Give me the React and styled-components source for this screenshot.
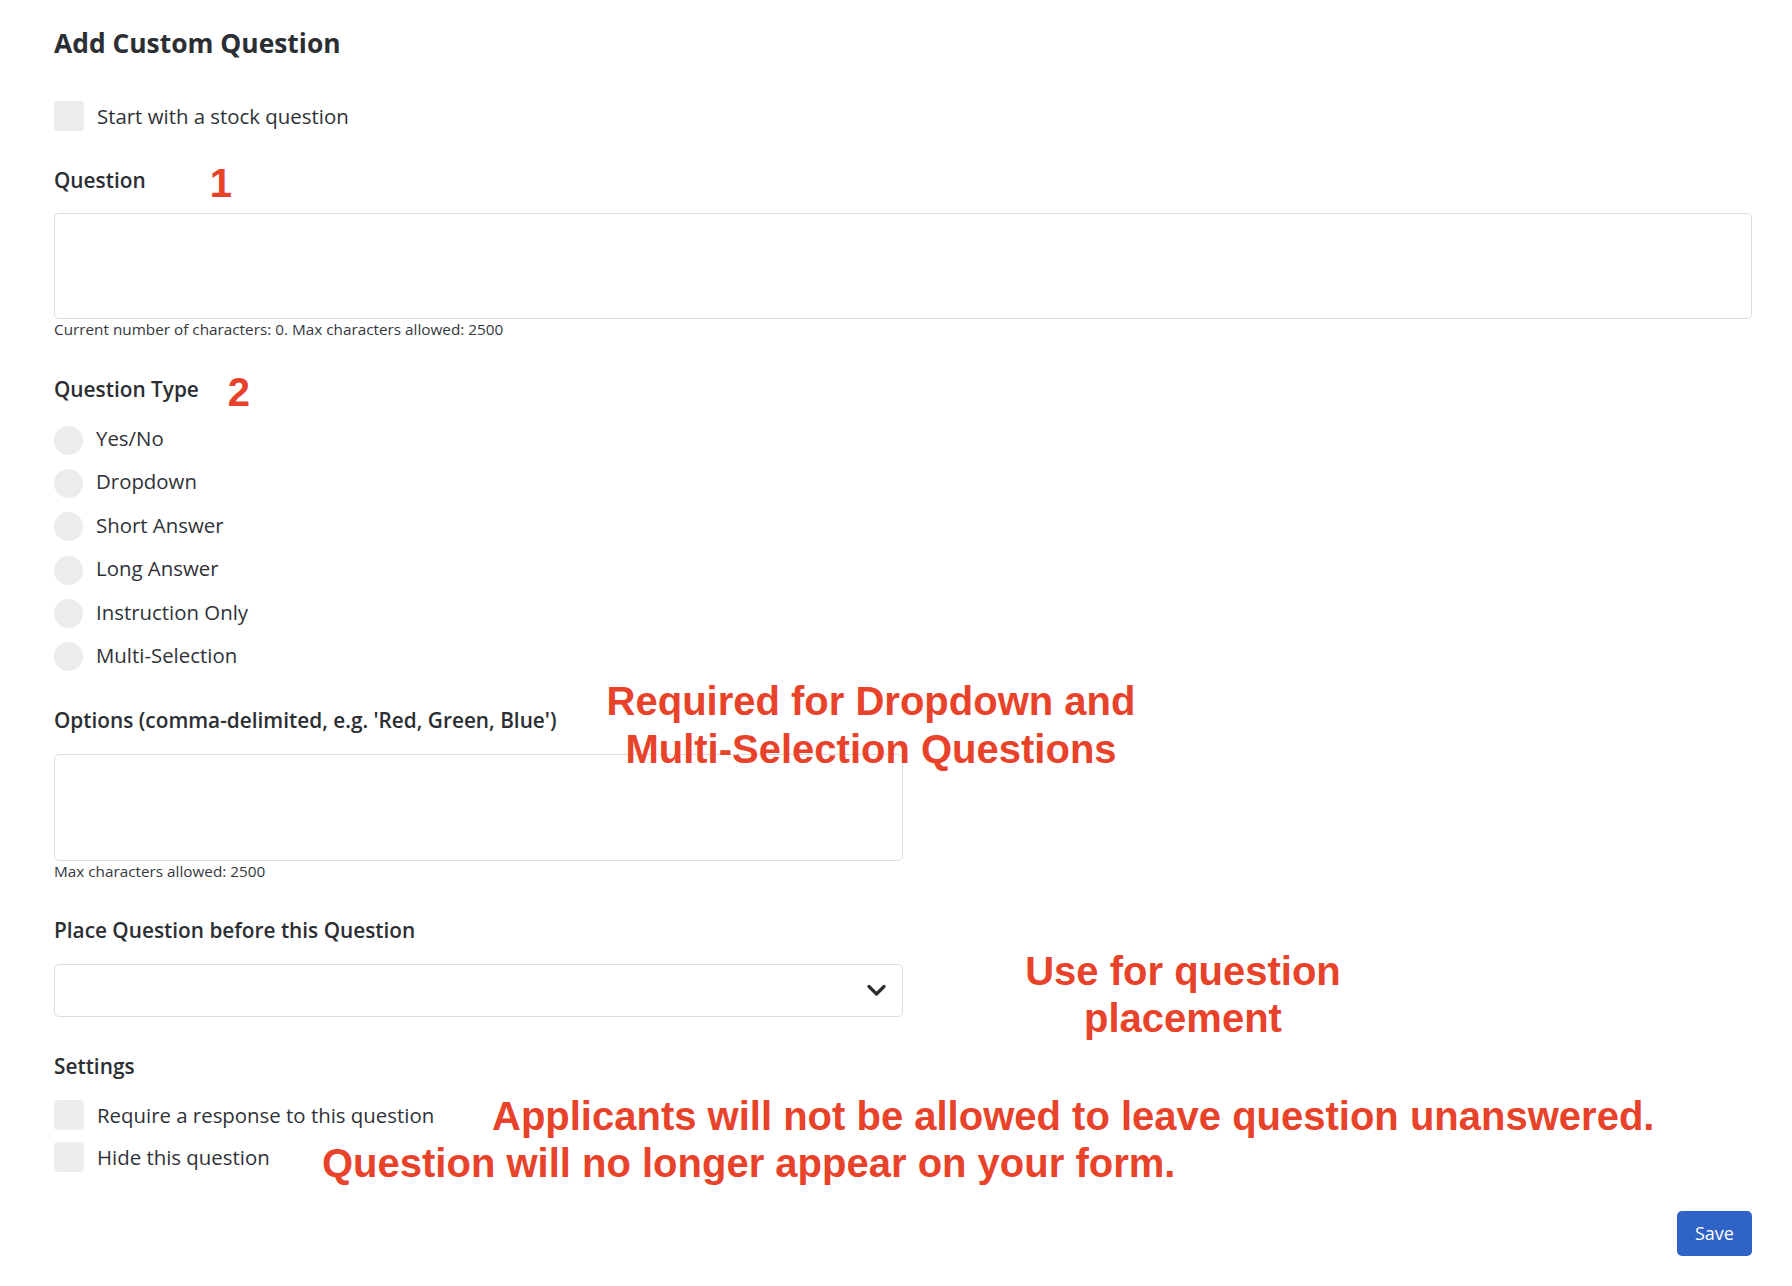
import React from 'react';
import styled, { createGlobalStyle } from 'styled-components';

const GlobalStyle = createGlobalStyle`
  html, body {
    margin: 0;
    padding: 0;
    background: #ffffff;
  }
  body {
    font-family: "Open Sans", "Liberation Sans", sans-serif;
    color: #2b2e33;
  }
`;

const Page = styled.div`
  position: relative;
  padding: 25px 40px 30px 54px;
  display: flex;
  flex-direction: column;
`;

const Title = styled.h1`
  margin: 0;
  font-size: 26.4px;
  line-height: 36px;
  font-weight: 700;
  color: #2b2e33;
`;

const CheckRow = styled.label`
  display: flex;
  align-items: center;
  gap: 13px;
  height: 30px;
  margin-top: ${(p) => p.$mt || 0}px;
`;

const Box = styled.span`
  width: 30px;
  height: 30px;
  border-radius: 4px;
  background: #ececee;
  flex-shrink: 0;
`;

const Radio = styled.span`
  width: 29px;
  height: 29px;
  border-radius: 50%;
  background: #ececee;
  flex-shrink: 0;
`;

const OptionText = styled.span`
  font-size: 20.4px;
  line-height: 30px;
  color: #2f3237;
  position: relative;
  top: ${(p) => p.$nudge || 0}px;
`;

const Section = styled.section`
  position: relative;
  margin-top: ${(p) => p.$mt}px;
  display: flex;
  flex-direction: column;
`;

const LabelRow = styled.div`
  display: flex;
  align-items: flex-start;
  height: 30px;
`;

const Label = styled.div`
  font-size: 20.8px;
  line-height: 30px;
  font-weight: 600;
  color: #2b2e33;
`;

const StepNumber = styled.span`
  font-family: "Liberation Sans", Arial, sans-serif;
  font-weight: 700;
  font-size: 40px;
  line-height: 30px;
  color: #e8432a;
  margin-top: 3px;
  margin-left: ${(p) => p.$ml}px;
`;

const TextArea = styled.textarea`
  display: block;
  box-sizing: border-box;
  width: ${(p) => (p.$width ? `${p.$width}px` : '100%')};
  height: ${(p) => p.$height}px;
  margin-top: ${(p) => p.$mt || 18}px;
  border: 1px solid #dcdcdc;
  border-radius: 5px;
  background: #fff;
  resize: none;
  outline: none;
  font-family: inherit;
`;

const Helper = styled.div`
  margin-top: 1px;
  font-size: 15.3px;
  line-height: 18px;
  color: #34373c;
`;

const RadioList = styled.div`
  margin-top: 21px;
  display: flex;
  flex-direction: column;
  gap: 13.4px;
`;

const RadioRow = styled.label`
  display: flex;
  align-items: center;
  gap: 13px;
  height: 30px;
`;

const Select = styled.div`
  box-sizing: border-box;
  width: 849px;
  height: 53px;
  margin-top: 19px;
  border: 1px solid #dcdcdc;
  border-radius: 5px;
  display: flex;
  align-items: center;
  justify-content: flex-end;
  padding-right: 16px;
`;

const Note = styled.div`
  position: absolute;
  top: ${(p) => p.$top}px;
  left: ${(p) => p.$left}px;
  width: ${(p) => (p.$width ? `${p.$width}px` : 'auto')};
  text-align: ${(p) => (p.$center ? 'center' : 'left')};
  white-space: ${(p) => (p.$center ? 'normal' : 'nowrap')};
  font-family: "Liberation Sans", Arial, sans-serif;
  font-weight: 700;
  font-size: 40px;
  line-height: ${(p) => p.$lh || 48}px;
  color: #e8432a;
  pointer-events: none;
`;

const Footer = styled.div`
  display: flex;
  justify-content: flex-end;
  margin-top: 39px;
`;

const SaveButton = styled.button`
  width: 75px;
  height: 45px;
  border: none;
  border-radius: 5px;
  background: #3063c6;
  color: #fff;
  font-family: "Open Sans", sans-serif;
  font-size: 18px;
  cursor: pointer;
`;

const Chevron = () => (
  <svg width="19" height="13" viewBox="0 0 19 13" fill="none">
    <path d="M2 2.5 L9.5 10 L17 2.5" stroke="#2b2e33" strokeWidth="3.2" strokeLinecap="round" strokeLinejoin="round" />
  </svg>
);

const types = ['Yes/No', 'Dropdown', 'Short Answer', 'Long Answer', 'Instruction Only', 'Multi-Selection'];

export default function App() {
  return (
    <Page>
      <GlobalStyle />
      <Title>Add Custom Question</Title>

      <CheckRow $mt={40}>
        <Box />
        <OptionText>Start with a stock question</OptionText>
      </CheckRow>

      <Section $mt={34}>
        <LabelRow>
          <Label>Question</Label>
          <StepNumber $ml={64}>1</StepNumber>
        </LabelRow>
        <TextArea $height={106} />
        <Helper>Current number of characters: 0. Max characters allowed: 2500</Helper>
      </Section>

      <Section $mt={36}>
        <LabelRow>
          <Label>Question Type</Label>
          <StepNumber $ml={29}>2</StepNumber>
        </LabelRow>
        <RadioList>
          {types.map((t) => (
            <RadioRow key={t}>
              <Radio />
              <OptionText $nudge={-2}>{t}</OptionText>
            </RadioRow>
          ))}
        </RadioList>
      </Section>

      <Section $mt={33}>
        <Label>Options (comma-delimited, e.g. 'Red, Green, Blue')</Label>
        <TextArea $width={849} $height={107} $mt={19} />
        <Helper>Max characters allowed: 2500</Helper>
        <Note $top={-28} $left={537} $width={560} $center>
          Required for Dropdown and Multi-Selection Questions
        </Note>
      </Section>

      <Section $mt={35}>
        <Label>Place Question before this Question</Label>
        <Select>
          <Chevron />
        </Select>
        <Note $top={33} $left={929} $width={400} $lh={47} $center>
          Use for question placement
        </Note>
      </Section>

      <Section $mt={34}>
        <Label>Settings</Label>
        <CheckRow $mt={19}>
          <Box />
          <OptionText>Require a response to this question</OptionText>
        </CheckRow>
        <CheckRow $mt={12}>
          <Box />
          <OptionText>Hide this question</OptionText>
        </CheckRow>
        <Note $top={41} $left={438}>
          Applicants will not be allowed to leave question unanswered.
        </Note>
        <Note $top={88} $left={268}>
          Question will no longer appear on your form.
        </Note>
      </Section>

      <Footer>
        <SaveButton>Save</SaveButton>
      </Footer>
    </Page>
  );
}
